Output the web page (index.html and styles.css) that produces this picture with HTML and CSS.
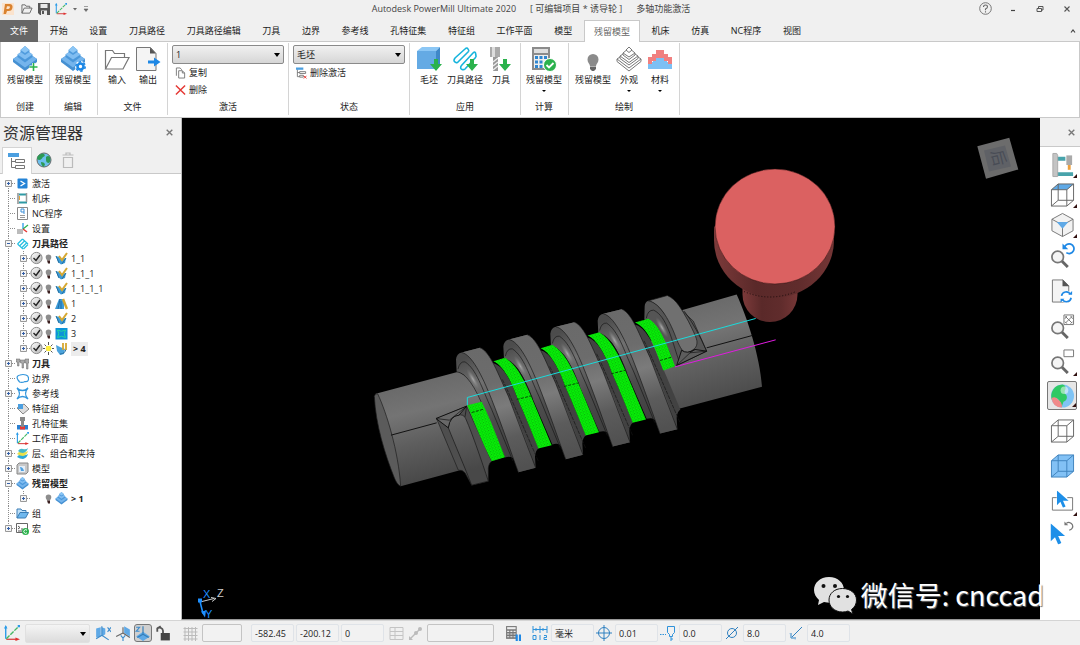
FILE: index.html
```html
<!DOCTYPE html>
<html lang="zh-CN">
<head>
<meta charset="utf-8">
<title>Autodesk PowerMill Ultimate 2020</title>
<link rel="stylesheet" href="styles.css">
</head>
<body>
<svg class="sprite" aria-hidden="true">
  <defs>
    <linearGradient id="ball" x1="0" y1="0" x2="1" y2="1"><stop offset="0" stop-color="#fff"/><stop offset="1" stop-color="#b4b4b4"/></linearGradient>
  </defs>
  <symbol id="stock" viewBox="0 0 26 26">
    <path d="M13 5 25 13v3l-12 9-12-9v-3z" fill="#4590d2"/><path d="M13 5 25 13 13 21.500 1 13z" fill="#74b4ec"/>
    <path d="M13 3 20.500 8.500V11L13 16.500 5.500 11V8.500z" fill="#4a97da"/><path d="M13 3 20.500 8.500 13 13.500 5.500 8.500z" fill="#80bdf1"/>
    <path d="M13 0 17.500 4v2L13 9 8.500 6V4z" fill="#4f9bdd"/><path d="M13 0 17.500 4 13 7 8.500 4z" fill="#8cc6f5"/>
  </symbol>
  <symbol id="arrow-down" viewBox="0 0 12 12"><path d="M4 0h4v5h4l-6 7-6-7h4z" fill="#2bb24c"/></symbol>
  <symbol id="toolpath" viewBox="0 0 26 26"><path d="M3 13 13 4M5 18 17 6M9 21 21 8M13 24 24 12M13 4q2-2 3 0t1 2M3 13q-2 3 0 4t2 1M21 8q2-2 2.500 0t.5 4M9 21q-1 3 1 3.500t3-.5" fill="none" stroke="#16b4dc" stroke-width="1.600"/></symbol>
  <symbol id="bulb" viewBox="0 0 11 15"><path d="M5.500 3.500a2.800 2.800 0 0 1 2.800 2.800c0 1.300-1 2-1.300 3.200H4C3.700 8.300 2.700 7.600 2.700 6.300a2.800 2.800 0 0 1 2.800-2.800z" fill="#8d8d8d"/><path d="M4 9.500h3v3H5z" fill="#3b2020"/></symbol>
  <symbol id="bulb-on" viewBox="0 0 11 15"><path d="M5.500 1v3M5.500 11v3M0 7.500h2M9 7.500h2M1.500 3.500l2 2M7.500 9.500l2 2M9.500 3.500l-2 2M3.500 9.500l-2 2" stroke="#555"/><circle cx="5.500" cy="7.500" r="2.800" fill="#ffee3c"/></symbol>
  <symbol id="check" viewBox="0 0 13 15"><circle cx="6.500" cy="7" r="5.600" fill="url(#ball)" stroke="#8c8c8c"/><path d="M3.500 7 6 9.500 10 4" fill="none" stroke="#222" stroke-width="1.400"/></symbol>
  <symbol id="t-mid" viewBox="0 0 15 15"><path d="M8.500 0v15M10 7.500h5" stroke="#8c8c8c" stroke-dasharray="1 1" fill="none"/></symbol>
  <symbol id="t-line" viewBox="0 0 15 15"><path d="M8.500 0v15" stroke="#8c8c8c" stroke-dasharray="1 1"/></symbol>
  <symbol id="t-plus" viewBox="0 0 15 15"><path d="M8.500 0v15M12 7.500h3" stroke="#8c8c8c" stroke-dasharray="1 1" fill="none"/><path d="M5.500 4.500h6v6h-6z" fill="#f4f4f4" stroke="#999"/><path d="M7 7.500h3M8.500 6v3" stroke="#335fa8"/></symbol>
  <symbol id="t-top" viewBox="0 0 15 15"><path d="M8.500 8v7M12 7.500h3" stroke="#8c8c8c" stroke-dasharray="1 1" fill="none"/><path d="M5.500 4.500h6v6h-6z" fill="#f4f4f4" stroke="#999"/><path d="M7 7.500h3M8.500 6v3" stroke="#335fa8"/></symbol>
  <symbol id="t-end" viewBox="0 0 15 15"><path d="M8.500 0v8M12 7.500h3" stroke="#8c8c8c" stroke-dasharray="1 1" fill="none"/><path d="M5.500 4.500h6v6h-6z" fill="#f4f4f4" stroke="#999"/><path d="M7 7.500h3M8.500 6v3" stroke="#335fa8"/></symbol>
  <symbol id="t-minus" viewBox="0 0 15 15"><path d="M8.500 0v15M12 7.500h3" stroke="#8c8c8c" stroke-dasharray="1 1" fill="none"/><path d="M5.500 4.500h6v6h-6z" fill="#f4f4f4" stroke="#999"/><path d="M7 7.500h3" stroke="#335fa8"/></symbol>
  <symbol id="finish" viewBox="0 0 13 13"><path d="M1 4l3 1 2 2 5-1-1 5-4 1.500L3 10z" fill="#3d9bd8"/><path d="M1 4l3 7M11 6l-4 6" stroke="#236f9e" fill="none"/><path d="M12 1 7 8 4 4" fill="none" stroke="#d6a832" stroke-width="2"/></symbol>
  <symbol id="axes" viewBox="0 0 14 14"><path d="M1.500 12V1" stroke="#2a9be8" stroke-width="1.200"/><path d="M0 3 1.500 0 3 3z" fill="#2a9be8"/><path d="M2 12.500h9" stroke="#d84a4a" stroke-width="1.200"/><path d="M10 11l4 1.500-4 1.500z" fill="#e02f2f"/><path d="M2 12 12 2" stroke="#44b864" stroke-width="1.200" stroke-dasharray="4 1"/><path d="M12 0h2v2h-2z" fill="#2a9be8"/></symbol>
  <symbol id="corner" viewBox="0 0 4 4"><path d="M4 0v4H0z" fill="#301010"/></symbol>
  <symbol id="box" viewBox="0 0 26 26"><path d="M1.500 7.500h16v17h-16zM8.500 1.500h16v17h-16zM1.500 7.500l7-6M17.500 7.500l7-6M1.500 24.500l7-6M17.500 24.500l7-6"/></symbol>
  <symbol id="lens" viewBox="0 0 26 26"><circle cx="8" cy="10" r="6" fill="#f5f5f5" stroke="#777" stroke-width="1.800"/><path d="M12.500 14.500 18.500 20.500" stroke="#666" stroke-width="3"/></symbol>
  <symbol id="pointer" viewBox="0 0 14 20"><path d="M0 0v17l4-4 3 7 3-1.500-3-6.500h6.500z" fill="#1e8fe8"/></symbol>
</svg>

<div class="app">
<header class="titlebar">
  <div class="quick">
    <svg class="logo" viewBox="0 0 12 12"><path d="M0 0h12v12H0z" fill="#fbe3cd"/><path d="M3 1h4.500q3.500 0 3 3.500T6.500 8H5l-1 3H1.500zM5 3.200 4.300 6h2q1.300 0 1.600-1.400T7 3.200z" fill="#d9822f" fill-rule="evenodd"/></svg>
    <button class="tool" aria-label="打开"><svg viewBox="0 0 13 12"><path d="M1 10.500v-9h3.500l1 1.500h4v2M1 10.500l2.500-5.500H12l-2.500 5.500z" fill="none" stroke="#666"/></svg></button>
    <button class="tool" aria-label="保存"><svg viewBox="0 0 12 12"><path d="M0 0h12v12H2L0 10z" fill="#555"/><path d="M2.500 1h7v4h-7zM3 7.500h6V12H3z" fill="#e8e8e8"/><path d="M4 8h2v3H4z" fill="#555"/></svg></button>
    <button class="tool" aria-label="工作平面"><svg viewBox="0 0 14 14"><use href="#axes"/></svg></button>
    <button class="tiny" aria-label="更多"><svg viewBox="0 0 6 6"><path d="M1 2h4L3 4.500z" fill="#666"/></svg></button>
    <button class="tiny" aria-label="自定义"><svg viewBox="0 0 6 6"><path d="M1 .5h4M1 3h4L3 5.500z" fill="#666" stroke="#666" stroke-width=".6"/></svg></button>
  </div>
  <h1 class="caption"><span>Autodesk PowerMill Ultimate 2020</span><span>[ 可编辑项目 * 诱导轮 ]</span><span>多轴功能激活</span></h1>
  <div class="window-buttons">
    <button aria-label="帮助"><svg class="help" viewBox="0 0 13 13"><circle cx="6.500" cy="6.500" r="5.800" fill="none" stroke="#777"/><path d="M4.500 5q0-2 2-2t2 1.700Q8.500 6 6.500 7v1.200M6.500 9.200v1.200" fill="none" stroke="#666" stroke-width="1.100"/></svg></button>
    <button aria-label="最小化"><svg viewBox="0 0 8 8"><path d="M2 5.500h4" stroke="#444" stroke-width="1.200"/></svg></button>
    <button aria-label="还原"><svg viewBox="0 0 8 8"><path d="M2.500 3V1.500h4.500v3.500H5.500M1 3.500h4.500v3H1z" fill="none" stroke="#555"/></svg></button>
    <button aria-label="关闭"><svg viewBox="0 0 8 8"><path d="M1.500 1.500l5 5M6.500 1.500l-5 5" stroke="#555" stroke-width="1.100"/></svg></button>
  </div>
</header>

<nav class="tabbar">
  <div class="tabs" role="tablist">
    <button class="tab file" role="tab">文件</button><button class="tab" role="tab">开始</button><button class="tab" role="tab">设置</button><button class="tab" role="tab">刀具路径</button><button class="tab" role="tab">刀具路径编辑</button><button class="tab" role="tab">刀具</button><button class="tab" role="tab">边界</button><button class="tab" role="tab">参考线</button><button class="tab" role="tab">孔特征集</button><button class="tab" role="tab">特征组</button><button class="tab" role="tab">工作平面</button><button class="tab" role="tab">模型</button><button class="tab active" role="tab" aria-selected="true">残留模型</button><button class="tab" role="tab">机床</button><button class="tab" role="tab">仿真</button><button class="tab" role="tab">NC程序</button><button class="tab" role="tab">视图</button>
  </div>
  <button class="collapse" aria-label="折叠"><svg viewBox="0 0 8 8"><path d="M2 5.500 4 3l2 2.500" fill="none" stroke="#444" stroke-width="1.200"/></svg></button>
</nav>

<div class="ribbon">
  <section class="group narrow">
    <div class="items"><button class="big"><svg viewBox="0 0 26 26"><use href="#stock"/><path d="M21.500 17v8M17.500 21h8" stroke="#fff" stroke-width="3"/><path d="M21.500 17v8M17.500 21h8" stroke="#2bb24c" stroke-width="1.600"/></svg><span>残留模型</span></button></div>
    <h2>创建</h2>
  </section>
  <section class="group narrow">
    <div class="items"><button class="big"><svg viewBox="0 0 26 26"><use href="#stock"/><circle cx="20.500" cy="20.500" r="5.500" fill="#fff"/><circle cx="20.500" cy="20.500" r="3" fill="none" stroke="#1e88e5" stroke-width="2.600"/><circle cx="20.500" cy="20.500" r="4.700" fill="none" stroke="#1e88e5" stroke-width="1.600" stroke-dasharray="2.500 2.400"/></svg><span>残留模型</span></button></div>
    <h2>编辑</h2>
  </section>
  <section class="group">
    <div class="items">
      <button class="big"><svg viewBox="0 0 26 26"><path d="M1.500 23V4.500h7l2 3h10v4M1.500 23l6-11.500H25L19 23z" fill="none" stroke="#777" stroke-width="1.200"/></svg><span>输入</span></button>
      <button class="big"><svg viewBox="0 0 26 26"><path d="M1.500 1.500h14l5.500 6V24.500H1.500z" fill="#f4f4f4" stroke="#777"/><path d="M15 1.500v6h6z" fill="#555"/><path d="M13 14.500h6v-3l6.500 4.500-6.500 4.500v-3h-6z" fill="#1e88e5"/></svg><span>输出</span></button>
    </div>
    <h2>文件</h2>
  </section>
  <section class="group wide">
    <div class="stack">
      <div class="combo"><select aria-label="激活残留模型"><option>1</option></select><svg viewBox="0 0 6 4"><path d="M0 0h6L3 4z"/></svg></div>
      <button class="small"><svg viewBox="0 0 12 12"><path d="M1.500 9V.5h4l2 2M4 3.500h4l2.500 2.500v5.500H4zM8 3.500V6h2.500" fill="#fff" stroke="#777"/></svg><span>复制</span></button>
      <button class="small"><svg viewBox="0 0 12 12"><path d="M1 1l10 10M11 1 1 11" stroke="#e53935" stroke-width="1.600"/></svg><span>删除</span></button>
    </div>
    <h2>激活</h2>
  </section>
  <section class="group wide">
    <div class="stack">
      <div class="combo"><select aria-label="状态"><option>毛坯</option></select><svg viewBox="0 0 6 4"><path d="M0 0h6L3 4z"/></svg></div>
      <button class="small"><svg viewBox="0 0 12 12"><path d="M1.500 2v8H4M1.500 5.500H4" stroke="#777" fill="none"/><path d="M0 0h8v2.500H0z" fill="#4b9fe0"/><path d="M4 4.500h6.500v2H4zM4 8.500h4v2H4z" fill="none" stroke="#777"/><path d="M8.500 9l3 3M11.500 9l-3 3" stroke="#e53935"/></svg><span>删除激活</span></button>
    </div>
    <h2>状态</h2>
  </section>
  <section class="group">
    <div class="items">
      <button class="big"><svg viewBox="0 0 26 26"><path d="M1 5 6 1h18l-4 4z" fill="#8cc7f5"/><path d="M1 5h19v18H1z" fill="#64aae4"/><path d="M20 5l4-4v17l-4 5z" fill="#3f88c8"/><use href="#arrow-down" x="14" y="13" width="12" height="12"/></svg><span>毛坯</span></button>
      <button class="big"><svg viewBox="0 0 26 26"><use href="#toolpath" x="0" y="-1" width="26" height="26"/><use href="#arrow-down" x="14" y="13" width="12" height="12"/></svg><span>刀具路径</span></button>
      <button class="big"><svg viewBox="0 0 26 26"><path d="M2 1h10v10H2z" fill="#aaa"/><path d="M4 1h3v10H4z" fill="#ddd"/><path d="M5 11h5v14H5z" fill="#999"/><path d="M5 16l5-4M5 20l5-4M5 24l5-4" stroke="#eee" stroke-width="1.400"/><use href="#arrow-down" x="11" y="13" width="12" height="12"/></svg><span>刀具</span></button>
    </div>
    <h2>应用</h2>
  </section>
  <section class="group narrow">
    <div class="items"><button class="big"><svg viewBox="0 0 26 26"><path d="M1 1h18v23H1z" fill="#8b8b8b"/><path d="M3 3h14v4H3z" fill="#dedede"/><path d="M3 9h14v13H3z" fill="#eee"/><path d="M4 10h3v3H4zM8.500 10h3v3h-3zM13 10h3v3h-3zM4 14.500h3v3H4zM8.500 14.500h3v3h-3zM4 19h3v3H4zM8.500 19h3v3h-3z" fill="#2f86d0"/><circle cx="19" cy="19" r="6.500" fill="#2bb24c" stroke="#fff"/><path d="M15.500 19l2.500 2.500 4.500-4.500" fill="none" stroke="#fff" stroke-width="1.800"/></svg><span>残留模型</span><svg class="drop" viewBox="0 0 4 3"><path d="M0 0h4L2 2z"/></svg></button></div>
    <h2>计算</h2>
  </section>
  <section class="group">
    <div class="items">
      <button class="big"><svg viewBox="0 0 26 26"><path d="M13 8a5.500 5.500 0 0 1 5.500 5.500c0 3-2 4-2.500 6.500h-6c-.5-2.500-2.500-3.500-2.500-6.500A5.500 5.500 0 0 1 13 8z" fill="#8b8b8b"/><path d="M10 20.500h6V23l-2 2h-2l-2-2z" fill="#666"/></svg><span>残留模型</span></button>
      <button class="big"><svg viewBox="0 0 26 26"><g fill="#fff" stroke="#777"><path d="M1 13 13 5l12 8v2.500L13 25 1 15.500z"/><path d="M1 13l12 9 12-9M4 10 13 4l9 6v2.500L13 19l-9-6.500z"/><path d="M4 10l9 6.500 9-6.500M7 7 13 2l6 5v2l-6 4.500L7 9z"/><path d="M10 4 13 1l3 3-3 2.500zM7 7l6 4 6-4"/></g></svg><span>外观</span><svg class="drop" viewBox="0 0 4 3"><path d="M0 0h4L2 2z"/></svg></button>
      <button class="big"><svg viewBox="0 0 26 26"><path d="M1 23v-7h5v-4h4V9h6v3h4v4h5v7z" fill="#7cc0f4"/><path d="M1 18v-7h4V8h4V4h8v4h4v3h4v7h-4v-3h-4v-3h-8v3H5v3z" fill="#f08080"/></svg><span>材料</span><svg class="drop" viewBox="0 0 4 3"><path d="M0 0h4L2 2z"/></svg></button>
    </div>
    <h2>绘制</h2>
  </section>
</div>

<main class="workspace">
  <aside class="explorer">
    <div class="pane-head"><h2>资源管理器</h2><button class="close" aria-label="关闭"><svg viewBox="0 0 8 8"><path d="M1.500 1.500l5 5M6.500 1.500l-5 5" stroke="#777" stroke-width="1.200"/></svg></button></div>
    <div class="pane-tabs">
      <button class="on" aria-label="树"><svg viewBox="0 0 18 18"><path d="M0 1h11v4H0z" fill="#4b9fe0"/><path d="M3.500 6v9.500H7M3.500 9.500H7" fill="none" stroke="#777"/><path d="M7.500 7.500h9v3h-9zM7.500 13.500h9v3h-9z" fill="#fff" stroke="#777"/></svg></button>
      <button aria-label="网络"><svg viewBox="0 0 18 18"><circle cx="9" cy="9" r="7" fill="#6cc0ee" stroke="#666"/><path d="M4 4q3-2.500 5-1 2 2-1 3-1 2-3 3-2 0-3-1 0-3 2-4zM11 6q2-2 4 0 1 4-1 6-3 0-3-3zM6 11q3 0 4 2l-1 3q-3-1-3-5z" fill="#2c9a55"/></svg></button>
      <button aria-label="删除"><svg viewBox="0 0 18 18"><path d="M4.500 6.500h9v10h-9zM3.500 4h11M7 4V2h4v2" fill="none" stroke="#bbb" stroke-width="1.200"/></svg></button>
    </div>
    <ul class="tree">
      <li><svg class="twig"><use href="#t-top"/></svg><svg class="icon" viewBox="0 0 13 13"><rect x="1.500" y="1.500" width="10" height="10" rx="1" fill="#2483d6"/><path d="M4.500 4l4 2.500-4 2.500" fill="none" stroke="#fff" stroke-width="1.300"/></svg><span>激活</span></li>
      <li><svg class="twig"><use href="#t-mid"/></svg><svg class="icon" viewBox="0 0 13 13"><path d="M2 1v11" stroke="#aaa" stroke-width="2"/><path d="M3 2.500h7M3 10.500h8" stroke="#2f9aa5" stroke-width="2"/><path d="M10.500 1v9" stroke="#999" stroke-width="1.500"/><path d="M3.500 4v4" stroke="#e8a33a"/></svg><span>机床</span></li>
      <li><svg class="twig"><use href="#t-mid"/></svg><svg class="icon" viewBox="0 0 13 13"><path d="M1.500.5h10v12h-10z" fill="#fff" stroke="#888"/><path d="M5 2h3v3H5zM8 5v2" fill="none" stroke="#3c8fd8"/><path d="M4 8.500h5M4 10.500h5" stroke="#999"/></svg><span>NC程序</span></li>
      <li><svg class="twig"><use href="#t-mid"/></svg><svg class="icon" viewBox="0 0 13 13"><path d="M7 7V1" stroke="#2a9be8" stroke-width="1.300"/><path d="M7 7l5-4" stroke="#2bb24c" stroke-width="1.300"/><path d="M7 7l4 3" stroke="#e53935" stroke-width="1.500"/><path d="M1 7h6v5H1z" fill="#bbb"/></svg><span>设置</span></li>
      <li class="strong"><svg class="twig"><use href="#t-minus"/></svg><svg class="icon" viewBox="0 0 13 13"><path d="M1.500 7 6.500 2M3.500 9l5-5M5.500 11l5-5M7.500 12l4.500-4.500M6.500 2 12 7M1.500 7 7 12" fill="none" stroke="#25bfe0" stroke-width="1.200"/></svg><span>刀具路径</span></li>
      <li><svg class="twig"><use href="#t-line"/></svg><svg class="twig"><use href="#t-plus"/></svg><svg class="check"><use href="#check"/></svg><svg class="bulb"><use href="#bulb"/></svg><svg class="icon"><use href="#finish"/></svg><span>1_1</span></li>
      <li><svg class="twig"><use href="#t-line"/></svg><svg class="twig"><use href="#t-plus"/></svg><svg class="check"><use href="#check"/></svg><svg class="bulb"><use href="#bulb"/></svg><svg class="icon"><use href="#finish"/></svg><span>1_1_1</span></li>
      <li><svg class="twig"><use href="#t-line"/></svg><svg class="twig"><use href="#t-plus"/></svg><svg class="check"><use href="#check"/></svg><svg class="bulb"><use href="#bulb"/></svg><svg class="icon"><use href="#finish"/></svg><span>1_1_1_1</span></li>
      <li><svg class="twig"><use href="#t-line"/></svg><svg class="twig"><use href="#t-plus"/></svg><svg class="check"><use href="#check"/></svg><svg class="bulb"><use href="#bulb"/></svg><svg class="icon" viewBox="0 0 13 13"><path d="M0 12 4 2h5v10z" fill="#3d9bd8"/><path d="M3 12 5 2M6 12V4" stroke="#1f6da8"/><path d="M8 2l4 10" stroke="#d6a832" stroke-width="2.500"/></svg><span>1</span></li>
      <li><svg class="twig"><use href="#t-line"/></svg><svg class="twig"><use href="#t-plus"/></svg><svg class="check"><use href="#check"/></svg><svg class="bulb"><use href="#bulb"/></svg><svg class="icon"><use href="#finish"/></svg><span>2</span></li>
      <li><svg class="twig"><use href="#t-line"/></svg><svg class="twig"><use href="#t-plus"/></svg><svg class="check"><use href="#check"/></svg><svg class="bulb"><use href="#bulb"/></svg><svg class="icon" viewBox="0 0 13 13"><path d="M.5 1h12v11.500H.5z" fill="#0c93d8"/><path d="M2.500 3q4 2.500 8 0-2.500 3.500 0 7.500-4-2.500-8 0 2.500-4 0-7.500z" fill="none" stroke="#21d6a0"/></svg><span>3</span></li>
      <li class="strong"><svg class="twig"><use href="#t-line"/></svg><svg class="twig"><use href="#t-end"/></svg><svg class="check"><use href="#check"/></svg><svg class="bulb"><use href="#bulb-on"/></svg><svg class="icon" viewBox="0 0 13 13"><path d="M1 3l4 2 5 2-1 5-4 1-3-4z" fill="#4ba3dc"/><path d="M5 12q5 0 6-5" fill="none" stroke="#286f9f"/><path d="M8 1v7M11 1v7" stroke="#d6a832" stroke-width="1.800"/></svg><span class="picked">&gt; 4</span></li>
      <li class="strong"><svg class="twig"><use href="#t-plus"/></svg><svg class="icon" viewBox="0 0 13 13"><path d="M0 2h4v3H3v4H1.500V5H0zM4.500 3h4v3h-1v5H6V6H4.500zM9 2h4v4h-1v6h-1.500V6H9z" fill="#aaa" stroke="#666" stroke-width=".5"/></svg><span>刀具</span></li>
      <li><svg class="twig"><use href="#t-mid"/></svg><svg class="icon" viewBox="0 0 13 13"><path d="M4 3q3-1 6 0 3 1 2.500 4.500Q12 10 9 9.500 6 11 3.500 10 3 9 2 8-.5 4 4 3z" fill="#fff" stroke="#3396dc" stroke-width="1.200"/></svg><span>边界</span></li>
      <li><svg class="twig"><use href="#t-plus"/></svg><svg class="icon" viewBox="0 0 13 13"><path d="M1 1q5.500 5 11 0-5 5.500 0 11-5.500-5-11 0 5-5.500 0-11z" fill="#fff" stroke="#3396dc" stroke-width="1.300"/></svg><span>参考线</span></li>
      <li><svg class="twig"><use href="#t-mid"/></svg><svg class="icon" viewBox="0 0 13 13"><path d="M1 6l7-4 5 5-6 5z" fill="#ddd" stroke="#888"/><path d="M2 2h5v5H2z" fill="#4b9fe0"/></svg><span>特征组</span></li>
      <li><svg class="twig"><use href="#t-mid"/></svg><svg class="icon" viewBox="0 0 13 13"><path d="M1 8h11v4.500H1z" fill="#2a7fd0"/><path d="M4 9h5v3.500H4z" fill="#e53935"/><path d="M4 0h5v4H8v6H5V4H4z" fill="#888"/></svg><span>孔特征集</span></li>
      <li><svg class="twig"><use href="#t-mid"/></svg><svg class="icon" viewBox="0 0 14 14"><use href="#axes"/></svg><span>工作平面</span></li>
      <li><svg class="twig"><use href="#t-plus"/></svg><svg class="icon" viewBox="0 0 13 13"><path d="M1 10q2-3 5-2t6-1q-1 4-5 5-3 0-6-2z" fill="#2aa8d8"/><path d="M1 7q2-3 5-2t6-1q-1 4-5 5-3 0-6-2z" fill="#e8e04a"/><path d="M2 4q2-3 5-2t5-1q-1 4-5 5-3 0-5-2z" fill="#45b8c8"/></svg><span>层、组合和夹持</span></li>
      <li><svg class="twig"><use href="#t-plus"/></svg><svg class="icon" viewBox="0 0 13 13"><path d="M1 3l2-2h9v9l-2 2H1z" fill="#c8c8c8" stroke="#888"/><path d="M3 4h6v6H3z" fill="#e4eef8"/><path d="M4 5q3 0 4 4H5z" fill="#4b9fe0"/></svg><span>模型</span></li>
      <li class="strong"><svg class="twig"><use href="#t-minus"/></svg><svg class="icon"><use href="#stock"/></svg><span>残留模型</span></li>
      <li class="strong"><svg class="twig"><use href="#t-line"/></svg><svg class="twig"><use href="#t-end"/></svg><span class="check"></span><svg class="bulb"><use href="#bulb"/></svg><svg class="icon"><use href="#stock"/></svg><span>&gt; 1</span></li>
      <li><svg class="twig"><use href="#t-mid"/></svg><svg class="icon" viewBox="0 0 13 13"><path d="M1 11V2h4l1 1.500h4V6" fill="#bfe0f8" stroke="#3a7db5"/><path d="M1 11 4 5.500h8.500L9.500 11z" fill="#6fb8ee" stroke="#3a7db5"/></svg><span>组</span></li>
      <li><svg class="twig"><use href="#t-end"/></svg><svg class="icon" viewBox="0 0 13 13"><path d="M.5 1.500h11v9H.5z" fill="#fff" stroke="#666"/><path d="M2 4l2 1.500L2 7M5 7h2M2 9h5" fill="none" stroke="#555"/><circle cx="9.500" cy="9.500" r="3.500" fill="#2bb24c"/><path d="M11 8.300a1.800 1.800 0 1 0 0 2.400" fill="none" stroke="#fff"/></svg><span>宏</span></li>
    </ul>
  </aside>

  <div class="viewport">
    <svg class="scene" viewBox="182 118 858 502" preserveAspectRatio="xMidYMid slice">
      <defs>
        <linearGradient id="shaft" gradientUnits="userSpaceOnUse" x1="130" y1="300" x2="200" y2="585"><stop offset="0" stop-color="#6a6a6a"/><stop offset=".28" stop-color="#747474"/><stop offset=".6" stop-color="#5e5e5e"/><stop offset="1" stop-color="#484848"/></linearGradient>
        <linearGradient id="shaftR" gradientUnits="userSpaceOnUse" x1="1030" y1="50" x2="1110" y2="335"><stop offset="0" stop-color="#6a6a6a"/><stop offset=".3" stop-color="#747474"/><stop offset=".6" stop-color="#606060"/><stop offset="1" stop-color="#4c4c4c"/></linearGradient>
        <linearGradient id="land" gradientUnits="userSpaceOnUse" x1="330" y1="190" x2="430" y2="560"><stop offset="0" stop-color="#6a6a6a"/><stop offset=".3" stop-color="#6c6c6c"/><stop offset=".5" stop-color="#7b7b7b"/><stop offset=".75" stop-color="#5c5c5c"/><stop offset="1" stop-color="#515151"/></linearGradient>
        <linearGradient id="flank" gradientUnits="userSpaceOnUse" x1="280" y1="230" x2="420" y2="540"><stop offset="0" stop-color="#4c4c4c"/><stop offset=".25" stop-color="#707070"/><stop offset=".6" stop-color="#4c4c4c"/><stop offset="1" stop-color="#3e3e3e"/></linearGradient>
        <radialGradient id="glint"><stop offset="0" stop-color="#aaa"/><stop offset="1" stop-color="#777" stop-opacity="0"/></radialGradient>
        <linearGradient id="holder"><stop offset="0" stop-color="#7c3a3a"/><stop offset=".35" stop-color="#5a2929"/><stop offset=".7" stop-color="#602c2c"/><stop offset="1" stop-color="#753636"/></linearGradient>
        <pattern id="mesh" width="9" height="9" patternUnits="userSpaceOnUse" patternTransform="rotate(-14)"><path d="M0 0h9v9H0z" fill="#06f806"/><path d="M0 2h4M5 6h4" stroke="#0a960a" stroke-width="2.500"/></pattern>
        <g id="ridge">
          <path d="M275 262 273 225Q275 207 290 204L345 190C375 200 400 270 430 335L512 550 L460 563 450 530Q442 512 420 519L361 382C340 325 315 270 275 262z" fill="url(#flank)"/>
          <path d="M383 236 430 335 512 550 510 516Q512 496 521 492C500 440 470 370 455 335 435 280 410 240 383 236z" fill="#424242"/>
          <path d="M290 204 345 190C375 200 400 270 430 335 460 410 490 480 512 550L460 563C440 510 410 420 380 345 350 270 320 210 290 204z" fill="url(#land)"/>
          <ellipse cx="324" cy="284" rx="9" ry="36" fill="url(#glint)" transform="rotate(-30 324 284)"/>
          <path d="M279 254Q284 230 300 232C335 255 350 310 380 375L444 530M290 204C320 210 350 270 380 345 410 420 440 510 460 563M345 190C375 200 400 270 430 335L512 550M275 262Q315 265 361 382" fill="none" stroke="#161616" stroke-width="2"/>
          <path d="M412 285C430 320 450 370 520 530" fill="none" stroke="#151515" stroke-width="2" stroke-dasharray="12 3"/>
        </g>
        <g id="cut"><path d="M385 230 420 220C455 240 480 290 500 340L560 482 520 492C500 440 470 370 455 335 435 280 410 240 385 230z" fill="url(#mesh)"/><path d="M455 345l45-11" stroke="#064d06" stroke-width="3" stroke-dasharray="9 4"/></g>
      </defs>
      <g transform="translate(365 285) scale(.33333)">
        <path d="M32 328 280 262 345 300 390 500 285 557 107 605z" fill="url(#shaft)"/>
        <path d="M28 335Q30 326 38 328C65 385 100 500 107 605 100 603 94 594 88 580 60 510 32 420 28 335z" fill="#5b5b5b" stroke="#1b1b1b" stroke-width="2"/>
        <path d="M78 452 215 415" stroke="#111" stroke-width="3"/>
        <path d="M880 95 950 77 1115 30C1145 95 1185 215 1191 307L942 373Q928 380 932 400L850 200z" fill="url(#shaftR)"/>
        <path d="M1025 190 1162 153" stroke="#111" stroke-width="3"/>
        <path d="M215 403 305 365 380 530Q368 540 370 560V590L320 602 300 565Q292 555 280 557z" fill="#4e4e4e" stroke="#1b1b1b" stroke-width="2"/>
        <path d="M250 430Q250 395 278 392 296 388 302 402C325 455 350 530 370 590L320 602C300 550 270 480 250 430z" fill="url(#shaft)" stroke="#151515" stroke-width="2"/>
        <path d="M213 402 305 365 282 392Q255 394 250 430z" fill="#686868" stroke="#111" stroke-width="3"/><path d="M213 402l40 5 52-42-5 32" fill="none" stroke="#111" stroke-width="2"/>
        <use href="#ridge"/><use href="#ridge" x="142" y="-39"/><use href="#ridge" x="283" y="-77"/><use href="#ridge" x="425" y="-116"/>
        <path d="M307 362 350 352C375 400 400 470 420 518L380 530C355 480 330 420 307 362z" fill="url(#mesh)"/><path d="M320 384l36-10" stroke="#064d06" stroke-width="3" stroke-dasharray="9 4"/>
        <use href="#cut"/><use href="#cut" x="142" y="-39"/><use href="#cut" x="283" y="-77"/>
        <path d="M950 77 985 110 1025 200 935 243 870 120z" fill="#565656" stroke="#161616" stroke-width="2"/>
        <path d="M838 105 839 65Q840 53 850 49C887 55 917 115 935 165L955 205 935 243 930 247C915 200 890 120 838 105z" fill="#555"/>
        <path d="M850 49 907 33C935 45 950 75 970 110 985 140 996 162 996 172 997 190 985 197 965 206 953 202 947 193 935 165 917 115 887 55 850 49z" fill="#707070" stroke="#151515" stroke-width="2"/>
        <ellipse cx="891" cy="129" rx="9" ry="36" fill="url(#glint)" transform="rotate(-30 891 129)"/>
        <path d="M844 101Q848 76 866 77C905 95 920 165 942 230" fill="none" stroke="#151515" stroke-width="2"/>
        <path d="M810 114 850 103C885 120 910 190 930 245L895 258C870 190 850 130 810 114z" fill="url(#mesh)"/><path d="M885 228l35-10" stroke="#064d06" stroke-width="3" stroke-dasharray="9 4"/>
        <path d="M935 243 950 197Q965 210 990 195L1025 200z" fill="#5d5d5d" stroke="#111" stroke-width="3"/><path d="M935 243l40-38 50-5M975 205l15-10M958 80Q995 130 1025 200" fill="none" stroke="#111" stroke-width="2"/>
        <path d="M307 362V339L1172 102" fill="none" stroke="#19dcdc" stroke-width="3"/>
        <path d="M930 247 1232 166" stroke="#e01be0" stroke-width="3"/>
      </g>
      <path d="M742.500 285h55v10a27.500 27.500 0 0 1-55 0z" fill="url(#holder)"/>
      <path d="M714 227h120v14a60 57 0 0 1-120 0z" fill="url(#holder)"/>
      <path d="M744 292q26 11 52 0" fill="none" stroke="#1c0b0b" stroke-dasharray="1 2"/>
      <ellipse cx="775" cy="227" rx="60" ry="57.500" fill="#db6161" stroke="#2b1111" stroke-width=".5"/>
      <path d="M977.300 146.700 1009.300 138.300 1018.300 170 986 179.300z" fill="#6c6c6c"/><path d="M984 151l21-5 6 21-22 5z" fill="#5f6166"/>
      <text class="cube" transform="translate(991 152) rotate(76)">后</text>
      <path d="M200 602l3 12" stroke="#1e90ff" stroke-width="1.500"/><path d="M201 612l5-1-1 7zM198 599h4v4h-4z" fill="#1e90ff"/>
      <path d="M202 602l12-3M211 598l5 1-4 3" fill="none" stroke="#ccc"/>
      <text class="axis blue" x="203" y="598">X</text><text class="axis blue" x="205" y="618">Y</text><text class="axis" x="217" y="597">Z</text>
    </svg>
    <div class="watermark">
      <svg viewBox="0 0 44 38"><path d="M16 1C7 1 1 7 1 14c0 4 2 7 5 10l-1 5 6-3c12 3 20-3 20-12C31 7 25 1 16 1z" fill="#e1e1e1"/><path d="M29.500 12.500c-8 0-13.500 5-13.500 11.500s5.500 12 13.500 12c2 0 4-.4 5.500-1l5 3-1.500-4.500c3-2 5-5.500 5-9.500 0-6.500-6-11.500-14-11.500z" fill="#e1e1e1" stroke="#111"/><g fill="#111"><circle cx="10.500" cy="10" r="2"/><circle cx="22" cy="10" r="2"/><circle cx="25.500" cy="20.500" r="1.600"/><circle cx="34.500" cy="20.500" r="1.600"/></g></svg>
      <span>微信号: cnccad</span>
    </div>
  </div>

  <aside class="viewbar">
    <div class="pane-head"><button class="close" aria-label="关闭"><svg viewBox="0 0 8 8"><path d="M1.500 1.500l5 5M6.500 1.500l-5 5" stroke="#777" stroke-width="1.200"/></svg></button></div>
    <div class="row-set near">
      <button aria-label="机床"><svg viewBox="0 0 26 26"><path d="M7 6.500h9M7 22.500h17" stroke="#47a3ab" stroke-width="4"/><path d="M3 1h4l1 2v22H3z" fill="#c4c4c4" stroke="#aaa"/><path d="M17 3h6v10h-6z" fill="#aaa"/><path d="M18.500 13h3v5h-3z" fill="#eda03c"/></svg><svg class="corner"><use href="#corner"/></svg></button>
      <button aria-label="顶视图"><svg viewBox="0 0 26 26"><path d="M1.500 7.500l7-6h16l-7 6z" fill="#5fa9e6"/><use href="#box" fill="none" stroke="#666"/></svg><svg class="corner"><use href="#corner"/></svg></button>
      <button aria-label="等轴视图"><svg viewBox="0 0 26 26"><path d="M13 1 24 7v12l-11 6-11-6V7z" fill="#f2f2f2" stroke="#777"/><path d="M2 7l11 6 11-6M13 13v12" stroke="#777" fill="none"/><path d="M7 10h12l-6 7z" fill="#5fa9e6"/></svg><svg class="corner"><use href="#corner"/></svg></button>
      <button aria-label="上一视图"><svg viewBox="0 0 26 26"><use href="#lens" y="5" width="26" height="26"/><path d="M15 5.500a5 5 0 1 1 2 5" fill="none" stroke="#1e88e5" stroke-width="1.800"/><path d="M13 1v6h6z" fill="#1e88e5"/></svg></button>
    </div>
    <div class="row-set">
      <button aria-label="刷新"><svg viewBox="0 0 26 26"><path d="M2.500 1.500h11l6 6v17h-17z" fill="#f4f4f4" stroke="#777"/><path d="M13 1v7h7z" fill="#555"/><circle cx="17" cy="19" r="6.500" fill="#fff"/><path d="M12 18a5 5 0 0 1 9-2M22 20a5 5 0 0 1-9 2" fill="none" stroke="#1e88e5" stroke-width="1.700"/><path d="M19 17h4v-4zM15 21h-4v4z" fill="#1e88e5"/></svg></button>
      <button aria-label="缩放全部"><svg viewBox="0 0 26 26"><use href="#lens" y="5" width="26" height="26"/><path d="M14.500 1.500h10v10h-10z" fill="#fff" stroke="#777"/><path d="M16 3l7 7M23 3l-7 7M15.500 5.500l2-3M23.500 5.500l-2-3M15.500 8.500l2 2M23.500 8.500l-2 2" stroke="#777"/></svg></button>
      <button aria-label="缩放窗口"><svg viewBox="0 0 26 26"><use href="#lens" y="5" width="26" height="26"/><path d="M14.500 1.500h10v7h-10z" fill="#fff" stroke="#777"/></svg><svg class="corner"><use href="#corner"/></svg></button>
      <button class="on" aria-label="阴影"><svg viewBox="0 0 26 26"><circle cx="13" cy="13" r="12" fill="#7fc4f5"/><path d="M13 1A12 12 0 0 0 2 17q4-4 7 0t3 8l2-6q5-2 3-7-3-2-1-6 1-4-3-5z" fill="#2fc964"/><path d="M1.500 15q5-2 7 2 4 2 4 8Q3 25 1.500 15z" fill="#f08a8a"/><circle cx="15" cy="7" r="4" fill="#fff" opacity=".5"/></svg><svg class="corner"><use href="#corner"/></svg></button>
      <button aria-label="线框"><svg viewBox="0 0 26 26"><use href="#box" fill="none" stroke="#666"/></svg></button>
      <button aria-label="毛坯"><svg viewBox="0 0 26 26"><path d="M1.500 7.500l7-6h16v17l-7 6h-16z" fill="#82c1f5"/><use href="#box" fill="none" stroke="#3f83bd"/></svg></button>
      <button aria-label="框选"><svg viewBox="0 0 26 26"><path d="M7 9.500H2.500v13h21v-13H18" fill="none" stroke="#777"/><use href="#pointer" x="7" y="2" width="13" height="18"/></svg><svg class="corner"><use href="#corner"/></svg></button>
    </div>
    <div class="row-set near last"><button aria-label="选择"><svg viewBox="0 0 26 26"><use href="#pointer" x="0" y="3" width="17" height="22"/><path d="M17 3a4 4 0 1 1 3 7" fill="none" stroke="#777" stroke-width="1.300"/><path d="M15 1v4h4z" fill="#777"/></svg></button></div>
  </aside>
</main>

<footer class="status">
  <button class="s-icon" aria-label="工作平面"><svg viewBox="0 0 14 14"><use href="#axes"/></svg></button>
  <div class="combo flat"><select aria-label="工作平面列表"><option></option></select><svg viewBox="0 0 6 4"><path d="M0 0h6L3 4z"/></svg></div>
  <div class="planes">
    <button class="s-icon" aria-label="X"><svg viewBox="0 0 14 14"><path d="M1 3l4-1v8l-4 1zM6 2l3 1v5l-3 2z" fill="#5fa9e6"/><path d="M6 9l6 4M6 9l-5 3M6 9V1M11 2l3 4M14 2l-3 4" stroke="#3d8ccc" fill="none"/></svg></button>
    <button class="s-icon" aria-label="Y"><svg viewBox="0 0 14 14"><path d="M8 1l5 3v6L8 7z" fill="#5fa9e6"/><path d="M7 7l-6 3M7 7V2M7 7l6 4" stroke="#666" fill="none"/><path d="M5 9l2 2.500L9 9M7 11v3" stroke="#3d8ccc" fill="none"/></svg></button>
    <button class="s-icon on" aria-label="Z"><svg viewBox="0 0 14 14"><path d="M7 6l6 4-6 4-6-4z" fill="#5fa9e6"/><path d="M7 8V1M7 8L2 11M7 8l5 3" stroke="#347db8" fill="none"/><path d="M1 2h3L1 5.500h3" stroke="#3d8ccc" fill="none"/></svg></button>
    <button class="s-icon" aria-label="锁定"><svg viewBox="0 0 14 14"><path d="M5 7h8v6.500H5z" fill="#444"/><path d="M7 7V5a3 3 0 0 0-5-2v3M2 3l3-2" fill="none" stroke="#555" stroke-width="1.600"/></svg></button>
  </div>
  <div class="field-set"><svg class="s-glyph" viewBox="0 0 15 15"><path d="M.5 2.500h14M.5 6h14M.5 9.500h14M.5 13h14M2 1v14M5.500 1v14M9 1v14M12.500 1v14" stroke="#bbb"/></svg><input class="dim short" aria-label="栅格"></div>
  <div class="coords"><input aria-label="X 坐标" value="-582.45"><input aria-label="Y 坐标" value="-200.12"><input aria-label="Z 坐标" value="0"></div>
  <div class="field-set extra"><svg class="s-glyph" viewBox="0 0 15 15"><path d="M1 1.500h13v12H1zM6 1.500v12M1 5.500h13M1 9.500h13" fill="none" stroke="#c4c4c4"/></svg><svg class="s-glyph" viewBox="0 0 15 15"><path d="M2 13 12 3" stroke="#bbb" stroke-width="1.500"/><circle cx="12" cy="3" r="2" fill="#bbb"/><circle cx="8" cy="7" r="2" fill="#bbb"/><path d="M1 10v4h4z" fill="#bbb"/></svg><input class="dim long" aria-label="位置"></div>
  <button class="s-icon calc" aria-label="计算器"><svg viewBox="0 0 15 15"><path d="M1 1h10v12H1z" fill="#777"/><path d="M2 2h8v2H2z" fill="#eee"/><path d="M2 6h8M2 8.500h8M2 11h8" stroke="#eee" stroke-dasharray="2 1"/><path d="M10 9h2v6h-2zM13 9h2v6h-2z" fill="#1e88e5"/></svg></button>
  <label class="param"><svg viewBox="0 0 16 16"><path d="M1 1v7M15 1v7M8 1v7M1 4.500h14M4 3v3M11 3v3" stroke="#2f92da" fill="none"/><path d="M1 10.500h3v4H1zM8 10v5M12 10.500h2.500v2H12v2h3" stroke="#2f92da" fill="none"/></svg><input aria-label="单位" value="毫米"></label>
  <label class="param"><svg viewBox="0 0 16 16"><circle cx="8" cy="8" r="5.500" fill="none" stroke="#2f80c0"/><path d="M8 0v16M0 8h16" stroke="#2f80c0"/></svg><input aria-label="公差" value="0.01"></label>
  <label class="param"><svg viewBox="0 0 16 16"><path d="M0 9.500h6" stroke="#2f92da" stroke-dasharray="1.500 1"/><path d="M7.500 1.500h7v6l-2 2v2h-3v-2l-2-2zM10 13h2v2h-2" fill="none" stroke="#2f92da"/></svg><input aria-label="余量" value="0.0"></label>
  <label class="param"><svg viewBox="0 0 16 16"><circle cx="8" cy="8" r="4.500" fill="none" stroke="#2f80c0"/><path d="M2 14 14 2" stroke="#2f80c0"/></svg><input aria-label="直径" value="8.0"></label>
  <label class="param"><svg viewBox="0 0 16 16"><path d="M3 8v5h5M4 12l10-10" fill="none" stroke="#2f80c0"/><path d="M2 8q1 6 6 6" fill="none" stroke="#8cbde2"/></svg><input aria-label="刀尖半径" value="4.0"></label>
</footer>
</div>
</body>
</html>
```

FILE: styles.css
```css
* { box-sizing: border-box; }
body { margin: 0; background: #f0f0f0; color: #222; font: 9px/12px "Open Sans", "Noto Sans CJK SC", sans-serif; }
button, input, select { font: inherit; color: inherit; border: 0; background: none; padding: 0; margin: 0; border-radius: 0; }
h1, h2 { margin: 0; font: inherit; }
svg { display: block; flex: none; }
.sprite { position: absolute; width: 0; height: 0; }
.app { display: flex; flex-direction: column; min-height: 100vh; }

.titlebar { display: flex; align-items: center; height: 17px; }
.quick { display: flex; align-items: center; gap: 5px; width: 90px; padding-left: 2px; }
.logo { width: 12px; height: 12px; margin-right: 2px; }
.tool svg { width: 12px; height: 12px; }
.tiny svg { width: 6px; height: 6px; }
.caption { flex: 1; display: flex; justify-content: center; gap: 14px; color: #444; white-space: pre; }
.window-buttons { display: flex; }
.window-buttons button { width: 27px; height: 16px; display: flex; align-items: center; justify-content: center; }
.window-buttons svg { width: 8px; height: 8px; }
.window-buttons .help { width: 13px; height: 13px; }

.tabbar { display: flex; justify-content: space-between; align-items: center; height: 25px; padding-top: 3px; border-bottom: 1px solid #c9c9c9; }
.tabs { flex: 1; max-width: 811px; display: flex; justify-content: space-between; }
.tab { height: 22px; padding: 0 10px; border: solid transparent; border-width: 1px 0 0; white-space: nowrap; }
.tab.file { background: #666; color: #fff; border-color: #666; }
.tab.active { background: #fff; color: #666; box-shadow: inset 1px 0 #c9c9c9, inset -1px 0 #c9c9c9; border-color: #c9c9c9; margin-bottom: -1px; height: 23px; }
.collapse svg { width: 8px; height: 8px; margin-right: 3px; }

.ribbon { display: flex; height: 76px; padding: 1px 0 2px 1px; background: #fff; border: solid #c9c9c9; border-width: 0 1px 1px; }
.group { display: flex; flex-direction: column; justify-content: space-between; align-items: center; padding: 3px 6px 2px; border-right: 1px solid #d4d4d4; }
.group.narrow { padding: 3px 6px 2px 5px; }
.group.wide { padding: 2px 4px; }
.items { display: flex; gap: 5px; }
.big { display: flex; flex-direction: column; align-items: center; gap: 2px; min-width: 26px; }
.big > svg { width: 26px; height: 26px; }
.big .drop { width: 4px; height: 3px; margin-top: 2px; }
.stack { display: flex; flex-direction: column; align-items: flex-start; }
.combo { position: relative; width: 112px; }
.combo select { appearance: none; display: block; width: 100%; height: 19px; padding: 0 3px; border: 1px solid #8a8a8a; border-radius: 2px; background: linear-gradient(#f1f1f1, #d6d6d6); }
.combo svg { position: absolute; right: 4px; top: 8px; width: 6px; height: 4px; pointer-events: none; }
.small { display: flex; align-items: center; gap: 3px; height: 17px; padding-left: 3px; }
.small svg { width: 11px; height: 12px; }

.workspace { flex: 1; display: flex; }
.explorer { width: 182px; display: flex; flex-direction: column; background: #fff; border-right: 1px solid #bbb; }
.pane-head { display: flex; align-items: center; justify-content: space-between; height: 29px; padding: 0 7px 0 3px; background: #f0f0f0; }
.pane-head h2 { font-size: 16px; line-height: 24px; color: #333; }
.close svg { width: 9px; height: 9px; }
.pane-tabs { display: flex; height: 27px; padding: 0 2px; background: #f0f0f0; border-bottom: 1px solid #c9c9c9; }
.pane-tabs button { width: 24px; display: flex; justify-content: center; align-items: center; }
.pane-tabs .on { width: 30px; height: 27px; background: #fff; border: solid #d4d4d4; border-width: 1px 1px 0; }
.pane-tabs svg { width: 18px; height: 18px; }
.tree { list-style: none; margin: 0; padding: 2px 0; }
.tree li { display: flex; align-items: center; height: 15px; white-space: pre; }
.tree .twig { width: 15px; height: 15px; }
.tree .check { width: 13px; height: 15px; }
.tree .bulb { width: 11px; height: 15px; }
.tree .icon { width: 13px; height: 13px; margin: 0 3px 0 1px; }
.strong { font-weight: 700; }
.picked { background: #ececec; padding: 1px 2px; }

.viewport { position: relative; flex: 1; min-width: 0; background: #000; border-bottom: 1px solid #999; }
.scene { position: absolute; inset: 0; width: 100%; height: 100%; }
.cube { font-size: 16px; fill: #484c55; }
.axis { font: 11px "Liberation Sans", sans-serif; fill: #ccc; }
.axis.blue { fill: #1e90ff; }
.watermark { position: absolute; right: -4px; bottom: 5px; display: flex; align-items: center; gap: 4px; color: #fff; font-size: 27px; line-height: 38px; font-family: "Noto Sans CJK SC", sans-serif; text-shadow: 1px 1px 1px #777; white-space: nowrap; }
.watermark svg { width: 44px; height: 38px; }

.viewbar { width: 40px; background: #fff; }
.viewbar .pane-head { justify-content: flex-end; padding: 0 4px; border-bottom: 1px solid #c9c9c9; }
.row-set { display: flex; flex-direction: column; align-items: center; padding: 3px 0 0 4px; }
.row-set button { position: relative; display: flex; align-items: center; justify-content: center; width: 30px; height: 35px; }
.row-set.near button { height: 30px; }
.row-set.last { padding-top: 0; }
.row-set svg { width: 25px; height: 26px; }
.row-set .corner { position: absolute; right: 0; bottom: 2px; width: 4px; height: 4px; }
.row-set .on { height: 29px; margin: 3px 0; background: #e6e6e6; border: 1px solid #777; border-radius: 2px; }

.status { display: flex; align-items: center; height: 25px; padding-left: 3px; border-top: 1px solid #d4d4d4; }
.s-icon { display: flex; align-items: center; justify-content: center; width: 18px; height: 18px; }
.s-icon svg { width: 16px; height: 16px; }
.s-icon.on { background: #d0d0d0; border: 1px solid #777; border-radius: 3px; }
.combo.flat { width: 65px; margin: 0 4px; }
.combo.flat select { border-color: #e0e0e0; background: linear-gradient(#f4f4f4, #dcdcdc); }
.planes { display: flex; gap: 2px; }
.status input { width: 43px; height: 18px; padding: 0 3px; border: 1px solid #dfe3e8; border-radius: 2px; background: #f2f2f2; }
.status .dim { border-color: #c4c4c4; }
.status .short { width: 40px; }
.status .long { width: 67px; }
.field-set { display: flex; align-items: center; gap: 4px; margin: 0 9px 0 11px; }
.s-glyph { width: 15px; height: 15px; }
.coords { display: flex; gap: 2px; }
.extra { gap: 4px; margin: 0 10px 0 5px; }
.param { display: flex; align-items: center; gap: 3px; margin-left: 2px; }
.calc { margin-right: 8px; }
.param svg { width: 16px; height: 16px; }
```
